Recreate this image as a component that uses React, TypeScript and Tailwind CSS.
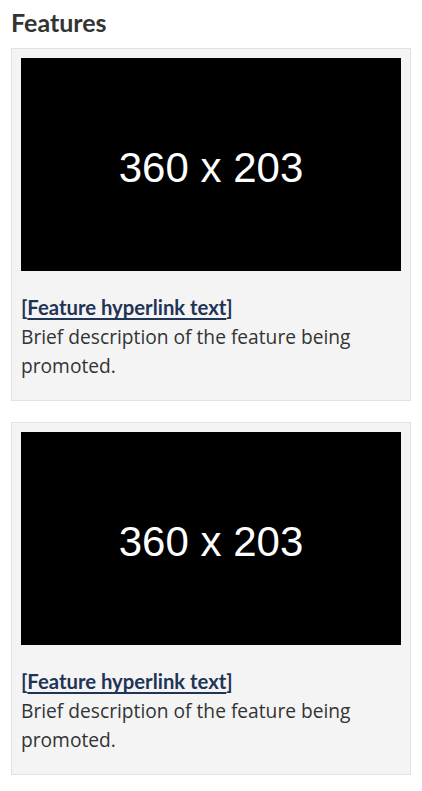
import React from 'react'

const FEATURES = [
  { id: 1, label: 'Feature hyperlink text', text: 'Brief description of the feature being promoted.' },
  { id: 2, label: 'Feature hyperlink text', text: 'Brief description of the feature being promoted.' },
]

function Placeholder() {
  return (
    <div className="flex h-[213px] w-full items-center justify-center bg-black">
      <span className="pt-[6px] font-['Liberation_Sans',Arial,sans-serif] text-[42px] leading-none text-white">
        360 x 203
      </span>
    </div>
  )
}

function FeatureCard({ label, text }: { label: string; text: string }) {
  return (
    <div className="border border-[#e2e2e2] bg-[#f4f4f4] px-[9px] pt-[9px] pb-[20px]">
      <Placeholder />
      <div className="mt-[22px] leading-[29px]">
        <div className="font-['Lato',sans-serif] text-[20.3px] font-bold text-[#1f3456]">
          [<a href="#" className="underline decoration-[2px] underline-offset-[3px]">{label}</a>]
        </div>
        <p className="font-['Open_Sans',sans-serif] text-[19.2px] text-[#333333]">{text}</p>
      </div>
    </div>
  )
}

export default function App() {
  return (
    <div className="min-h-screen bg-white px-[11px] pt-[6px]">
      <h2 className="mb-[10px] font-['Lato',sans-serif] text-[25px] font-bold leading-[32px] text-[#333333]">
        Features
      </h2>
      <div className="flex flex-col gap-[21px]">
        {FEATURES.map((f) => (
          <FeatureCard key={f.id} label={f.label} text={f.text} />
        ))}
      </div>
    </div>
  )
}
